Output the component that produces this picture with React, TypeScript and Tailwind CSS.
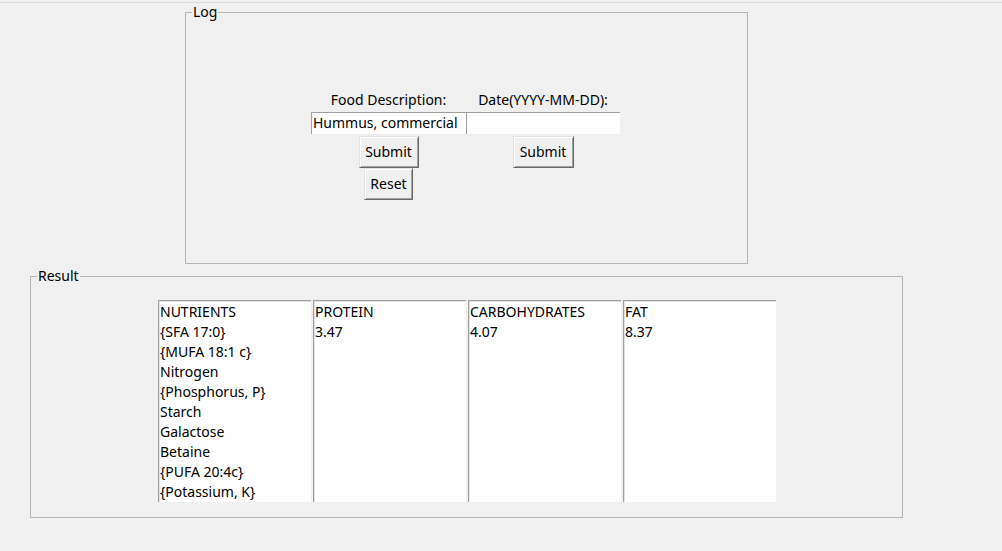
const NUTRIENTS = [
  "NUTRIENTS",
  "{SFA 17:0}",
  "{MUFA 18:1 c}",
  "Nitrogen",
  "{Phosphorus, P}",
  "Starch",
  "Galactose",
  "Betaine",
  "{PUFA 20:4c}",
  "{Potassium, K}",
];

const COLUMNS: string[][] = [
  NUTRIENTS,
  ["PROTEIN", "3.47"],
  ["CARBOHYDRATES", "4.07"],
  ["FAT", "8.37"],
];

const font = { fontFamily: '"Noto Sans", "Open Sans", sans-serif' };

function TkButton({ label, width }: { label: string; width: string }) {
  return (
    <button
      className={`${width} h-[32px] bg-[#f0f0f0] text-[14px] leading-none text-black border border-t-[#e3e3e3] border-l-[#e3e3e3] border-r-[#696969] border-b-[#696969] shadow-[inset_1px_1px_0_#ffffff,inset_-1px_-1px_0_#a0a0a0]`}
    >
      {label}
    </button>
  );
}

function Listbox({ lines }: { lines: string[] }) {
  return (
    <div className="w-[153px] h-[202px] bg-white border-t border-l border-[#a0a0a0] shadow-[inset_1px_1px_0_#e3e3e3] pl-[1px] pt-[1px]">
      {lines.map((line, i) => (
        <div key={i} className="h-[20px] leading-[20px] text-[14px] text-black whitespace-nowrap">
          {line}
        </div>
      ))}
    </div>
  );
}

export default function App() {
  return (
    <div className="w-[1002px] h-[551px] bg-[#f0f0f0] pt-[2px] overflow-hidden" style={font}>
      <div className="border-t border-[#dadada]">
        <fieldset className="ml-[185px] mt-[1px] w-[563px] h-[260px] border border-[#b4b4b4]">
          <legend className="ml-[6px] px-[1px] text-[14px] leading-[16px] text-black">Log</legend>
          <div className="flex justify-center pt-[70px] pr-[2px]">
            <div className="grid grid-cols-[155px_154px] gap-y-0">
              <div className="h-[22px] leading-[20px] text-[14px] text-center">Food Description:</div>
              <div className="h-[22px] leading-[20px] text-[14px] text-center">Date(YYYY-MM-DD):</div>
              <div className="h-[22px] bg-white border-t border-l border-[#a0a0a0] pl-[1px] text-[14px] leading-[20px] whitespace-nowrap overflow-hidden">
                Hummus, commercial
              </div>
              <div className="h-[22px] bg-white border-t border-l border-[#a0a0a0]" />
              <div className="flex justify-center pt-[2px]">
                <TkButton label="Submit" width="w-[60px]" />
              </div>
              <div className="flex justify-center pt-[2px]">
                <TkButton label="Submit" width="w-[61px]" />
              </div>
              <div className="flex justify-center">
                <TkButton label="Reset" width="w-[49px]" />
              </div>
            </div>
          </div>
        </fieldset>
        <fieldset className="ml-[30px] mt-[4px] w-[873px] h-[250px] border border-[#b4b4b4]">
          <legend className="ml-[6px] px-[1px] text-[14px] leading-[16px] text-black">Result</legend>
          <div className="flex gap-[2px] ml-[127px] pt-[16px]">
            {COLUMNS.map((col, i) => (
              <Listbox key={i} lines={col} />
            ))}
          </div>
        </fieldset>
      </div>
    </div>
  );
}
